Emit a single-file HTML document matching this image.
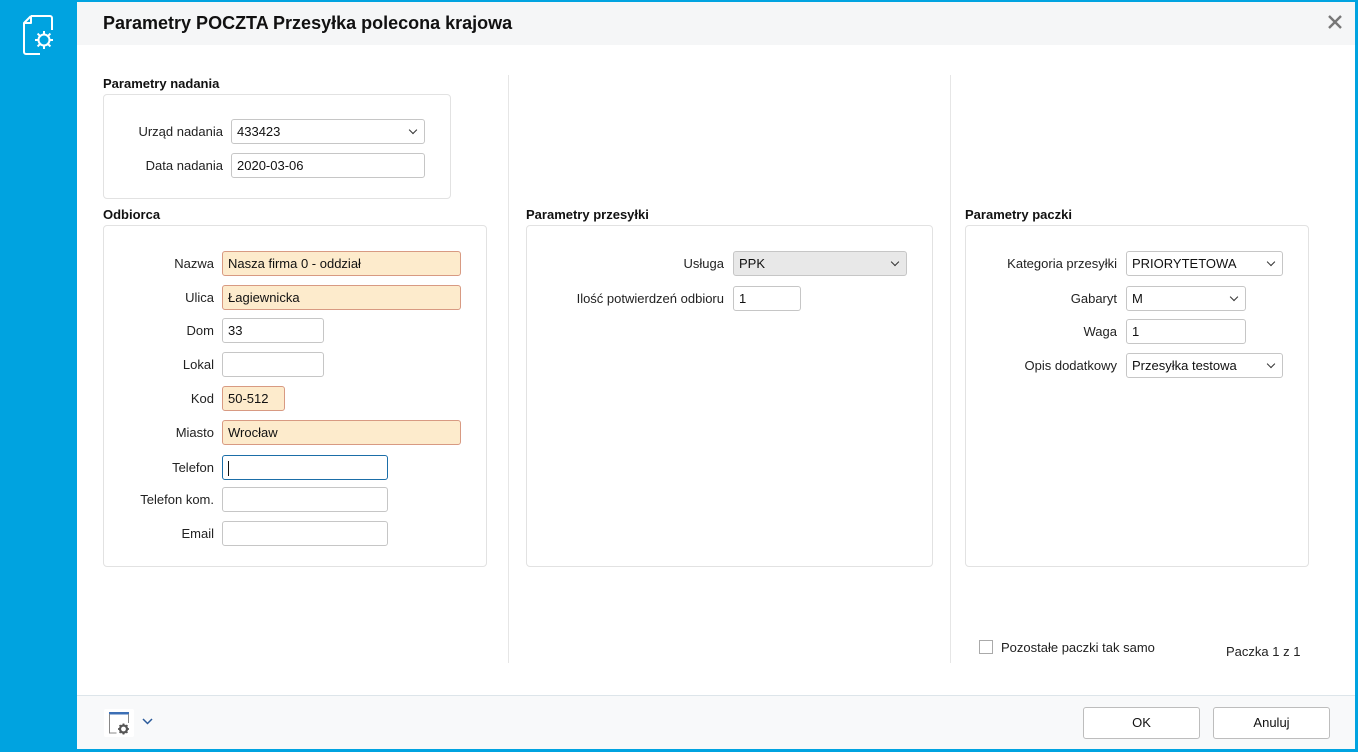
<!DOCTYPE html>
<html><head><meta charset="utf-8"><style>
*{box-sizing:border-box;margin:0;padding:0}
body{width:1358px;height:752px;background:#00a3e0;position:relative;overflow:hidden;font-family:"Liberation Sans",sans-serif;font-size:13px;color:#222}
.a{position:absolute}
.dlg{left:77px;top:2px;width:1278px;height:747px;background:#fff}
.title{left:77px;top:2px;width:1278px;height:43px;background:#f5f6f7}
.h{font-weight:bold;font-size:13px;color:#111}
.box{border:1px solid #e2e2e2;border-radius:4px;background:#fff}
.in{height:25px;border:1px solid #c6c6c6;border-radius:3px;background:#fff;padding:0 5px;line-height:23px;font-size:13px;color:#111}
.req{background:#fdebcc;border-color:#d89a82}
.lbl{text-align:right;line-height:25px;color:#222}
.sel::after{content:"";position:absolute;right:8px;top:7px;width:5px;height:5px;border-right:1.5px solid #333;border-bottom:1.5px solid #333;transform:rotate(45deg)}
.vs{width:1px;background:#e6e6e6}
.btn{height:32px;border:1px solid #bdbdbd;border-radius:3px;background:#fff;text-align:center;line-height:30px;color:#111}
</style></head><body>
<div class="a dlg"></div>
<div class="a title"></div>
<svg class="a" style="left:0;top:0" width="77" height="70" viewBox="0 0 77 70" fill="none" stroke="#fff" stroke-width="2" stroke-linejoin="round">
<path d="M31 16h19a2 2 0 0 1 2 2v12M31 16l-7 7v29a2 2 0 0 0 2 2h14"/><path d="M24 23h7v-7"/>
<circle cx="44" cy="40" r="5.5"/>
<path d="M44 31v3M44 46v3M35 40h3M50 40h3M37.6 33.6l2.1 2.1M48.3 44.3l2.1 2.1M50.4 33.6l-2.1 2.1M39.7 44.3l-2.1 2.1"/>
</svg>
<div class="a" style="left:103px;top:13px;font-size:18px;font-weight:bold;color:#111">Parametry POCZTA Przesyłka polecona krajowa</div>
<svg class="a" style="left:1327px;top:14px" width="16" height="16" viewBox="0 0 16 16"><path d="M2 2L14 14M14 2L2 14" stroke="#777" stroke-width="2.4"/></svg>

<div class="a vs" style="left:508px;top:75px;height:588px"></div>
<div class="a vs" style="left:950px;top:75px;height:588px"></div>

<div class="a h" style="left:103px;top:76px">Parametry nadania</div>
<div class="a box" style="left:103px;top:94px;width:348px;height:105px"></div>
<div class="a lbl" style="left:110px;top:119px;width:113px">Urząd nadania</div>
<div class="a in sel" style="left:231px;top:119px;width:194px">433423</div>
<div class="a lbl" style="left:110px;top:153px;width:113px">Data nadania</div>
<div class="a in" style="left:231px;top:153px;width:194px">2020-03-06</div>

<div class="a h" style="left:103px;top:207px">Odbiorca</div>
<div class="a box" style="left:103px;top:225px;width:384px;height:342px"></div>
<div class="a lbl" style="left:110px;top:251px;width:104px">Nazwa</div>
<div class="a in req" style="left:222px;top:251px;width:239px">Nasza firma 0 - oddział</div>
<div class="a lbl" style="left:110px;top:285px;width:104px">Ulica</div>
<div class="a in req" style="left:222px;top:285px;width:239px">Łagiewnicka</div>
<div class="a lbl" style="left:110px;top:318px;width:104px">Dom</div>
<div class="a in" style="left:222px;top:318px;width:102px">33</div>
<div class="a lbl" style="left:110px;top:352px;width:104px">Lokal</div>
<div class="a in" style="left:222px;top:352px;width:102px"></div>
<div class="a lbl" style="left:110px;top:386px;width:104px">Kod</div>
<div class="a in req" style="left:222px;top:386px;width:63px">50-512</div>
<div class="a lbl" style="left:110px;top:420px;width:104px">Miasto</div>
<div class="a in req" style="left:222px;top:420px;width:239px">Wrocław</div>
<div class="a lbl" style="left:110px;top:455px;width:104px">Telefon</div>
<div class="a in" style="left:222px;top:455px;width:166px;border-color:#1b6ea8"><span style="display:inline-block;width:1px;height:15px;background:#111;vertical-align:middle"></span></div>
<div class="a lbl" style="left:110px;top:487px;width:104px">Telefon kom.</div>
<div class="a in" style="left:222px;top:487px;width:166px"></div>
<div class="a lbl" style="left:110px;top:521px;width:104px">Email</div>
<div class="a in" style="left:222px;top:521px;width:166px"></div>

<div class="a h" style="left:526px;top:207px">Parametry przesyłki</div>
<div class="a box" style="left:526px;top:225px;width:407px;height:342px"></div>
<div class="a lbl" style="left:530px;top:251px;width:194px">Usługa</div>
<div class="a in sel" style="left:733px;top:251px;width:174px;background:#e8e8e8">PPK</div>
<div class="a lbl" style="left:530px;top:286px;width:194px">Ilość potwierdzeń odbioru</div>
<div class="a in" style="left:733px;top:286px;width:68px">1</div>

<div class="a h" style="left:965px;top:207px">Parametry paczki</div>
<div class="a box" style="left:965px;top:225px;width:344px;height:342px"></div>
<div class="a lbl" style="left:970px;top:251px;width:147px">Kategoria przesyłki</div>
<div class="a in sel" style="left:1126px;top:251px;width:157px">PRIORYTETOWA</div>
<div class="a lbl" style="left:970px;top:286px;width:147px">Gabaryt</div>
<div class="a in sel" style="left:1126px;top:286px;width:120px">M</div>
<div class="a lbl" style="left:970px;top:319px;width:147px">Waga</div>
<div class="a in" style="left:1126px;top:319px;width:120px">1</div>
<div class="a lbl" style="left:970px;top:353px;width:147px">Opis dodatkowy</div>
<div class="a in sel" style="left:1126px;top:353px;width:157px">Przesyłka testowa</div>

<div class="a" style="left:979px;top:640px;width:14px;height:14px;border:1px solid #aaa;background:#fff"></div>
<div class="a" style="left:1001px;top:640px">Pozostałe paczki tak samo</div>
<div class="a" style="left:1226px;top:644px">Paczka 1 z 1</div>

<div class="a" style="left:77px;top:695px;width:1278px;height:54px;background:#f8f9fa;border-top:1px solid #dde5ea"></div>
<svg class="a" style="left:104px;top:709px" width="30" height="28" viewBox="0 0 30 28">
<rect x="0" y="0" width="30" height="28" rx="2" fill="#fff"/>
<rect x="5" y="3" width="20" height="2.5" fill="#3c6fb5"/>
<path d="M5.5 5v19h7M24.5 5v9" stroke="#888" stroke-width="1" fill="none"/>
<circle cx="19.5" cy="20" r="3.5" fill="none" stroke="#555" stroke-width="2.2"/>
<path d="M19.5 14.5v2.5M19.5 23v2.5M14 20h2.5M22.5 20h2.5M15.6 16.1l1.8 1.8M21.6 22.1l1.8 1.8M23.4 16.1l-1.8 1.8M17.4 22.1l-1.8 1.8" stroke="#555" stroke-width="1.8"/>
</svg>
<svg class="a" style="left:142px;top:718px" width="11" height="7" viewBox="0 0 11 7"><path d="M1 1l4.5 4.5L10 1" stroke="#2a5a9a" stroke-width="1.5" fill="none"/></svg>
<div class="a btn" style="left:1083px;top:707px;width:117px">OK</div>
<div class="a btn" style="left:1213px;top:707px;width:117px">Anuluj</div>
</body></html>
